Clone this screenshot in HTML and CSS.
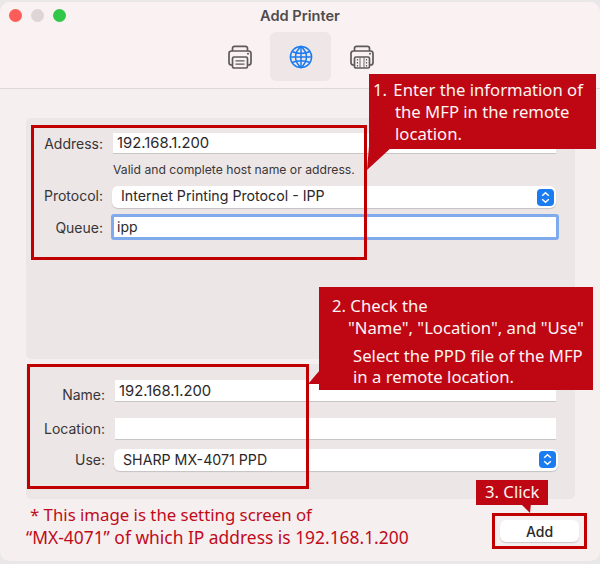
FILE: index.html
```html
<!DOCTYPE html>
<html lang="en">
<head>
<meta charset="utf-8">
<title>Add Printer</title>
<link rel="stylesheet" href="styles.css">
</head>
<body>
<div class="window">
  <header class="head">
    <div class="titlebar">
      <div class="lights"><span class="light red"></span><span class="light grey"></span><span class="light green"></span></div>
      <div class="title">Add Printer</div>
    </div>
    <nav class="tools">
      <div class="tool">
        <svg class="ico" viewBox="0 0 24 24" fill="none" stroke="#5e5a5b" stroke-width="1.7">
          <path d="M4.5 6V3.6Q4.5 1.4 6.7 1.4H17.3Q19.5 1.4 19.5 3.6V6"/>
          <path d="M4.5 20H3.5Q1 20 1 17.5V8.5Q1 6 3.5 6H20.5Q23 6 23 8.5V17.5Q23 20 20.5 20H19.5"/>
          <rect x="4.5" y="12" width="15" height="11" rx="1.6"/>
          <path d="M7.5 15.8H16.5M7.5 19.2H16.5" stroke-width="1.2"/>
          <circle cx="20" cy="8.8" r="1" fill="#5e5a5b" stroke="none"/>
        </svg>
      </div>
      <div class="tool active">
        <svg class="ico" viewBox="0 0 24 24" fill="none" stroke="#1a7cf0" stroke-width="1.5">
          <circle cx="12" cy="12" r="10.6"/>
          <path d="M12 1.4C8 5 6.5 8.5 6.5 12S8 19 12 22.6C16 19 17.5 15.5 17.5 12S16 5 12 1.4Z"/>
          <path d="M12 1.4V22.6M3 6.5C8 9 16 9 21 6.5M1.4 12H22.6M3 17.5C8 15 16 15 21 17.5"/>
        </svg>
      </div>
      <div class="tool">
        <svg class="ico" viewBox="0 0 24 24" fill="none" stroke="#5e5a5b" stroke-width="1.7">
          <path d="M4.5 6V3.6Q4.5 1.4 6.7 1.4H17.3Q19.5 1.4 19.5 3.6V6"/>
          <path d="M4.5 20H3.5Q1 20 1 17.5V8.5Q1 6 3.5 6H20.5Q23 6 23 8.5V17.5Q23 20 20.5 20H19.5"/>
          <rect x="4.5" y="12" width="15" height="11" rx="1.6"/>
          <path d="M7.5 14V21.5M16.5 14V21.5" stroke-width="1.2" stroke-dasharray="1.4 1.6"/>
          <path d="M10 12.5V22.5M14 12.5V22.5" stroke-width="0.9"/>
          <circle cx="20" cy="8.8" r="1" fill="#5e5a5b" stroke="none"/>
        </svg>
      </div>
    </nav>
  </header>

  <main class="content">
    <section class="panel top">
      <div class="row"><label class="label">Address:</label><div class="field num-text">192.168.1.200</div></div>
      <div class="hint">Valid and complete host name or address.</div>
      <div class="row protocol"><label class="label">Protocol:</label>
        <div class="select">Internet Printing Protocol - IPP
          <svg class="stepper" viewBox="0 0 17 17"><rect width="17" height="17" rx="4" fill="#1a7cf0"/><path d="M5.2 6.8 8.5 3.8 11.8 6.8M5.2 10.2 8.5 13.2 11.8 10.2" fill="none" stroke="#fff" stroke-width="1.5"/></svg>
        </div>
      </div>
      <div class="row queue"><label class="label">Queue:</label><div class="field focus">ipp</div></div>
    </section>
    <section class="panel bottom">
      <div class="row name"><label class="label">Name:</label><div class="field plain num-text">192.168.1.200</div></div>
      <div class="row location"><label class="label">Location:</label><div class="field plain"></div></div>
      <div class="row use"><label class="label">Use:</label>
        <div class="select">SHARP MX-4071 PPD
          <svg class="stepper" viewBox="0 0 17 17"><rect width="17" height="17" rx="4" fill="#1a7cf0"/><path d="M5.2 6.8 8.5 3.8 11.8 6.8M5.2 10.2 8.5 13.2 11.8 10.2" fill="none" stroke="#fff" stroke-width="1.5"/></svg>
        </div>
      </div>
    </section>
    <footer class="foot">
      <p class="note"><span class="note-first">* This image is the setting screen of</span><br><span class="note-second">“MX-4071” of which IP address is 192.168.1.200</span></p>
      <button class="add">Add</button>
    </footer>
  </main>

  <div class="outline o1"></div>
  <div class="outline o2"></div>
  <div class="outline o3"></div>

  <svg class="tails" viewBox="0 0 600 564">
    <path d="M367 170 369 146H393Z"/>
    <path d="M308 384 320 370V384Z"/>
    <path d="M520 503H531L530 513Z"/>
  </svg>
  <div class="callout c1"><span class="num">1.</span> Enter the information of<br><span class="ind1">the MFP in the remote</span><br><span class="ind1">location.</span></div>
  <div class="callout c2"><span class="l1">2. Check the</span><br><span class="l2">"Name", "Location", and "Use"</span><br><span class="l3">Select the PPD file of the MFP</span><br><span class="l4">in a remote location.</span></div>
  <div class="callout c3">3. Click</div>
</div>
</body>
</html>
```
FILE: styles.css
```css
* { box-sizing: border-box; }
html, body { margin: 0; padding: 0; width: 600px; height: 564px; overflow: hidden; background: #e9e7e8; }
body { font-family: Inter, "Liberation Sans", sans-serif; color: #2f2c2d; padding-top: 2px; }

.window { position: relative; width: 600px; height: 559px; background: #f6eff0; border-radius: 10px; overflow: hidden; }

.head { height: 87px; background: #f9f1f2; border-bottom: 1px solid #dfd9da; }
.titlebar { position: relative; height: 26px; display: flex; align-items: center; justify-content: center; top: 1px; }
.lights { position: absolute; left: 9px; top: 6px; display: flex; gap: 9px; }
.light { width: 13px; height: 13px; border-radius: 50%; }
.red { background: #fc5d58; }
.grey { background: #dcd6d7; }
.green { background: #31c748; }
.title { font-size: 14.6px; font-weight: 600; color: #504c4d; margin-top: -1px; }

.tools { display: flex; justify-content: center; gap: 0; margin-top: 4px; margin-left: 1px; }
.tool { width: 61px; height: 49px; display: flex; align-items: center; justify-content: center; border-radius: 6px; }
.tool.active { background: #eee6e7; }
.ico { width: 24px; height: 24px; display: block; }

.content { padding: 29px 25px 0 26px; }
.panel { background: #ece6e7; border-radius: 5px; width: 549px; }
.panel.top { height: 241px; padding-top: 15px; }
.panel.bottom { height: 135px; margin-top: 5px; padding-top: 16px; }

.row { display: flex; align-items: center; font-size: 14px; }
.label { width: 77px; text-align: right; margin-right: 10px; flex: none; color: #383435; }
.bottom .label { width: 79px; }
.field { width: 443px; height: 21px; background: #fff; border-bottom: 1.5px solid #c9c5c6; padding-left: 4px; line-height: 20px; color: #2b2829; font-size: 14px; }
.num-text { font-size: 14.8px; }
.field.plain { width: 441px; height: 22px; line-height: 22px; }
.hint { font-size: 12.2px; margin: 9px 0 0 87px; line-height: 14px; color: #3a3738; }
.protocol { margin-top: 8px; height: 23px; }
.protocol .label { margin-bottom: 2px; }
.select { position: relative; width: 444px; height: 22px; margin-left: -1px; background: #fff; border-radius: 6px; box-shadow: 0 1px 1px #c5c1c2; padding-left: 9px; line-height: 20px; color: #2b2829; font-size: 14.2px; }
.stepper { position: absolute; right: 2px; top: 3px; width: 17px; height: 17px; }
.queue { margin-top: 6px; height: 26px; }
.field.focus { width: 448px; height: 26px; margin-left: -2px; background: #fff; border: 3px solid #7fabec; border-radius: 3px; padding-left: 3px; line-height: 19px; }
.name { height: 22px; }
.name .label { margin-top: 6px; }
.location { margin-top: 16px; height: 22px; }
.location .label { margin-bottom: 2px; }
.use { margin-top: 9px; height: 22px; }
.use .label { margin-bottom: 2px; }
.use .select { line-height: 21px; }
.use .stepper { top: 2px; }

.foot { display: flex; justify-content: space-between; align-items: flex-start; }
.note { margin: 5px 0 0 0; font-family: "Noto Sans", sans-serif; line-height: 22px; color: #c00a1a; white-space: nowrap; }
.note-first { margin-left: 4px; font-size: 16.8px; }
.note-second { font-size: 17.4px; }
.add { width: 79px; height: 22px; margin: 21px -4px 0 0; border: 0; border-radius: 6px; background: #fff; box-shadow: 0 1px 1px #c8c4c5; font: 500 14px Inter, "Liberation Sans", sans-serif; color: #2b2829; padding: 0; }

.outline { position: absolute; border: 3px solid #c00000; }
.o1 { left: 31px; top: 123px; width: 336px; height: 135px; }
.o2 { left: 27px; top: 362px; width: 282px; height: 125px; }
.o3 { left: 492px; top: 511px; width: 95px; height: 36px; }

.tails { position: absolute; left: 0; top: -2px; width: 600px; height: 564px; fill: #be0712; }
.callout { position: absolute; background: #be0712; color: #fdf4f4; font-family: "Noto Sans", sans-serif; font-size: 16.7px; line-height: 22px; white-space: nowrap; }
.c1 { left: 369px; top: 72px; width: 227px; height: 75px; padding: 5px 0 0 4px; }
.ind1 { margin-left: 22px; }
.num { margin-right: 2px; }
.c2 { left: 319px; top: 285px; width: 274px; height: 103px; padding: 8px 0 0 13px; line-height: 22px; }
.l2 { margin-left: 16px; }
.l3 { margin-left: 21px; position: relative; top: 6px; }
.l4 { margin-left: 21px; position: relative; top: 5px; }
.c3 { left: 476px; top: 478px; width: 72px; height: 25px; padding: 1px 0 0 9px; }
```
